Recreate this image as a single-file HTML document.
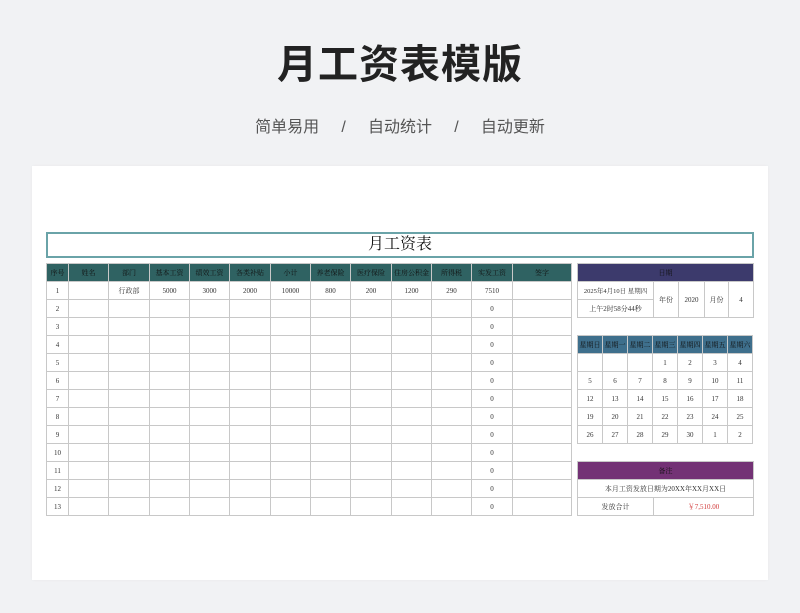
<!DOCTYPE html>
<html><head><meta charset="utf-8"><style>
*{margin:0;padding:0;box-sizing:border-box}
body{width:800px;height:613px;background:#f1f2f4;position:relative;overflow:hidden;font-family:"Liberation Serif","Noto Serif CJK SC",serif}
.t1{position:absolute;top:32px;left:0;width:800px;text-align:center;font:bold 40px "Liberation Sans","Noto Sans CJK SC",sans-serif;color:#222;letter-spacing:1px}
.t2{position:absolute;top:113px;left:0;width:800px;text-align:center;font:16px "Liberation Sans","Noto Sans CJK SC",sans-serif;color:#555}
.card{position:absolute;left:32px;top:166px;width:736px;height:414px;background:#fff;box-shadow:0 0 3px rgba(0,0,0,0.04)}
.ttl{position:absolute;left:46px;top:232px;width:708px;height:26px;border:2px solid #6aa3a8;text-align:center;font:16px "Liberation Serif","Noto Serif CJK SC",serif;line-height:22px;color:#111}
table{position:absolute;border-collapse:collapse;table-layout:fixed;font-size:7px;color:#333}
td{border:1px solid #c8c8c8;height:18px;text-align:center;padding:0;white-space:nowrap;overflow:hidden}
.h td{color:#111;font-size:7px}
</style></head><body>
<div class="t1">月工资表模版</div>
<div class="t2">简单易用&nbsp;&nbsp;&nbsp;&nbsp;&nbsp;/&nbsp;&nbsp;&nbsp;&nbsp;&nbsp;自动统计&nbsp;&nbsp;&nbsp;&nbsp;&nbsp;/&nbsp;&nbsp;&nbsp;&nbsp;&nbsp;自动更新</div>
<div class="card"></div>
<div class="ttl">月工资表</div>
<table style="left:46px;top:263px;width:525px">
<colgroup><col style="width:22px"><col style="width:40px"><col style="width:41px"><col style="width:40px"><col style="width:40px"><col style="width:41px"><col style="width:40px"><col style="width:40px"><col style="width:41px"><col style="width:40px"><col style="width:40px"><col style="width:41px"><col style="width:59px"></colgroup>
<tr class="h" style="background:#2f6262"><td>序号</td><td>姓名</td><td>部门</td><td>基本工资</td><td>绩效工资</td><td>各类补贴</td><td>小计</td><td>养老保险</td><td>医疗保险</td><td>住房公积金</td><td>所得税</td><td>实发工资</td><td>签字</td></tr>
<tr><td>1</td><td></td><td>行政部</td><td>5000</td><td>3000</td><td>2000</td><td>10000</td><td>800</td><td>200</td><td>1200</td><td>290</td><td>7510</td><td></td></tr>
<tr><td>2</td><td></td><td></td><td></td><td></td><td></td><td></td><td></td><td></td><td></td><td></td><td>0</td><td></td></tr>
<tr><td>3</td><td></td><td></td><td></td><td></td><td></td><td></td><td></td><td></td><td></td><td></td><td>0</td><td></td></tr>
<tr><td>4</td><td></td><td></td><td></td><td></td><td></td><td></td><td></td><td></td><td></td><td></td><td>0</td><td></td></tr>
<tr><td>5</td><td></td><td></td><td></td><td></td><td></td><td></td><td></td><td></td><td></td><td></td><td>0</td><td></td></tr>
<tr><td>6</td><td></td><td></td><td></td><td></td><td></td><td></td><td></td><td></td><td></td><td></td><td>0</td><td></td></tr>
<tr><td>7</td><td></td><td></td><td></td><td></td><td></td><td></td><td></td><td></td><td></td><td></td><td>0</td><td></td></tr>
<tr><td>8</td><td></td><td></td><td></td><td></td><td></td><td></td><td></td><td></td><td></td><td></td><td>0</td><td></td></tr>
<tr><td>9</td><td></td><td></td><td></td><td></td><td></td><td></td><td></td><td></td><td></td><td></td><td>0</td><td></td></tr>
<tr><td>10</td><td></td><td></td><td></td><td></td><td></td><td></td><td></td><td></td><td></td><td></td><td>0</td><td></td></tr>
<tr><td>11</td><td></td><td></td><td></td><td></td><td></td><td></td><td></td><td></td><td></td><td></td><td>0</td><td></td></tr>
<tr><td>12</td><td></td><td></td><td></td><td></td><td></td><td></td><td></td><td></td><td></td><td></td><td>0</td><td></td></tr>
<tr><td>13</td><td></td><td></td><td></td><td></td><td></td><td></td><td></td><td></td><td></td><td></td><td>0</td><td></td></tr>
</table>
<table style="left:577px;top:263px;width:176px">
<colgroup><col style="width:76px"><col style="width:25px"><col style="width:26px"><col style="width:24px"><col style="width:25px"></colgroup>
<tr class="h" style="background:#3c3a6c"><td colspan="5">日期</td></tr>
<tr><td style="font-size:6.5px">2025年4月10日 星期四</td><td rowspan="2">年份</td><td rowspan="2">2020</td><td rowspan="2">月份</td><td rowspan="2">4</td></tr>
<tr><td>上午2时58分44秒</td></tr>
</table>
<table style="left:577px;top:335px;width:176px">
<colgroup><col><col><col><col><col><col><col></colgroup>
<tr class="h" style="background:#3e6f8c"><td>星期日</td><td>星期一</td><td>星期二</td><td>星期三</td><td>星期四</td><td>星期五</td><td>星期六</td></tr>
<tr><td></td><td></td><td></td><td>1</td><td>2</td><td>3</td><td>4</td></tr>
<tr><td>5</td><td>6</td><td>7</td><td>8</td><td>9</td><td>10</td><td>11</td></tr>
<tr><td>12</td><td>13</td><td>14</td><td>15</td><td>16</td><td>17</td><td>18</td></tr>
<tr><td>19</td><td>20</td><td>21</td><td>22</td><td>23</td><td>24</td><td>25</td></tr>
<tr><td>26</td><td>27</td><td>28</td><td>29</td><td>30</td><td>1</td><td>2</td></tr>
</table>
<table style="left:577px;top:461px;width:176px">
<colgroup><col style="width:76px"><col style="width:100px"></colgroup>
<tr class="h" style="background:#733275"><td colspan="2">备注</td></tr>
<tr><td colspan="2">本月工资发放日期为20XX年XX月XX日</td></tr>
<tr><td>发放合计</td><td style="color:#d23a3a">￥7,510.00</td></tr>
</table>
</body></html>
